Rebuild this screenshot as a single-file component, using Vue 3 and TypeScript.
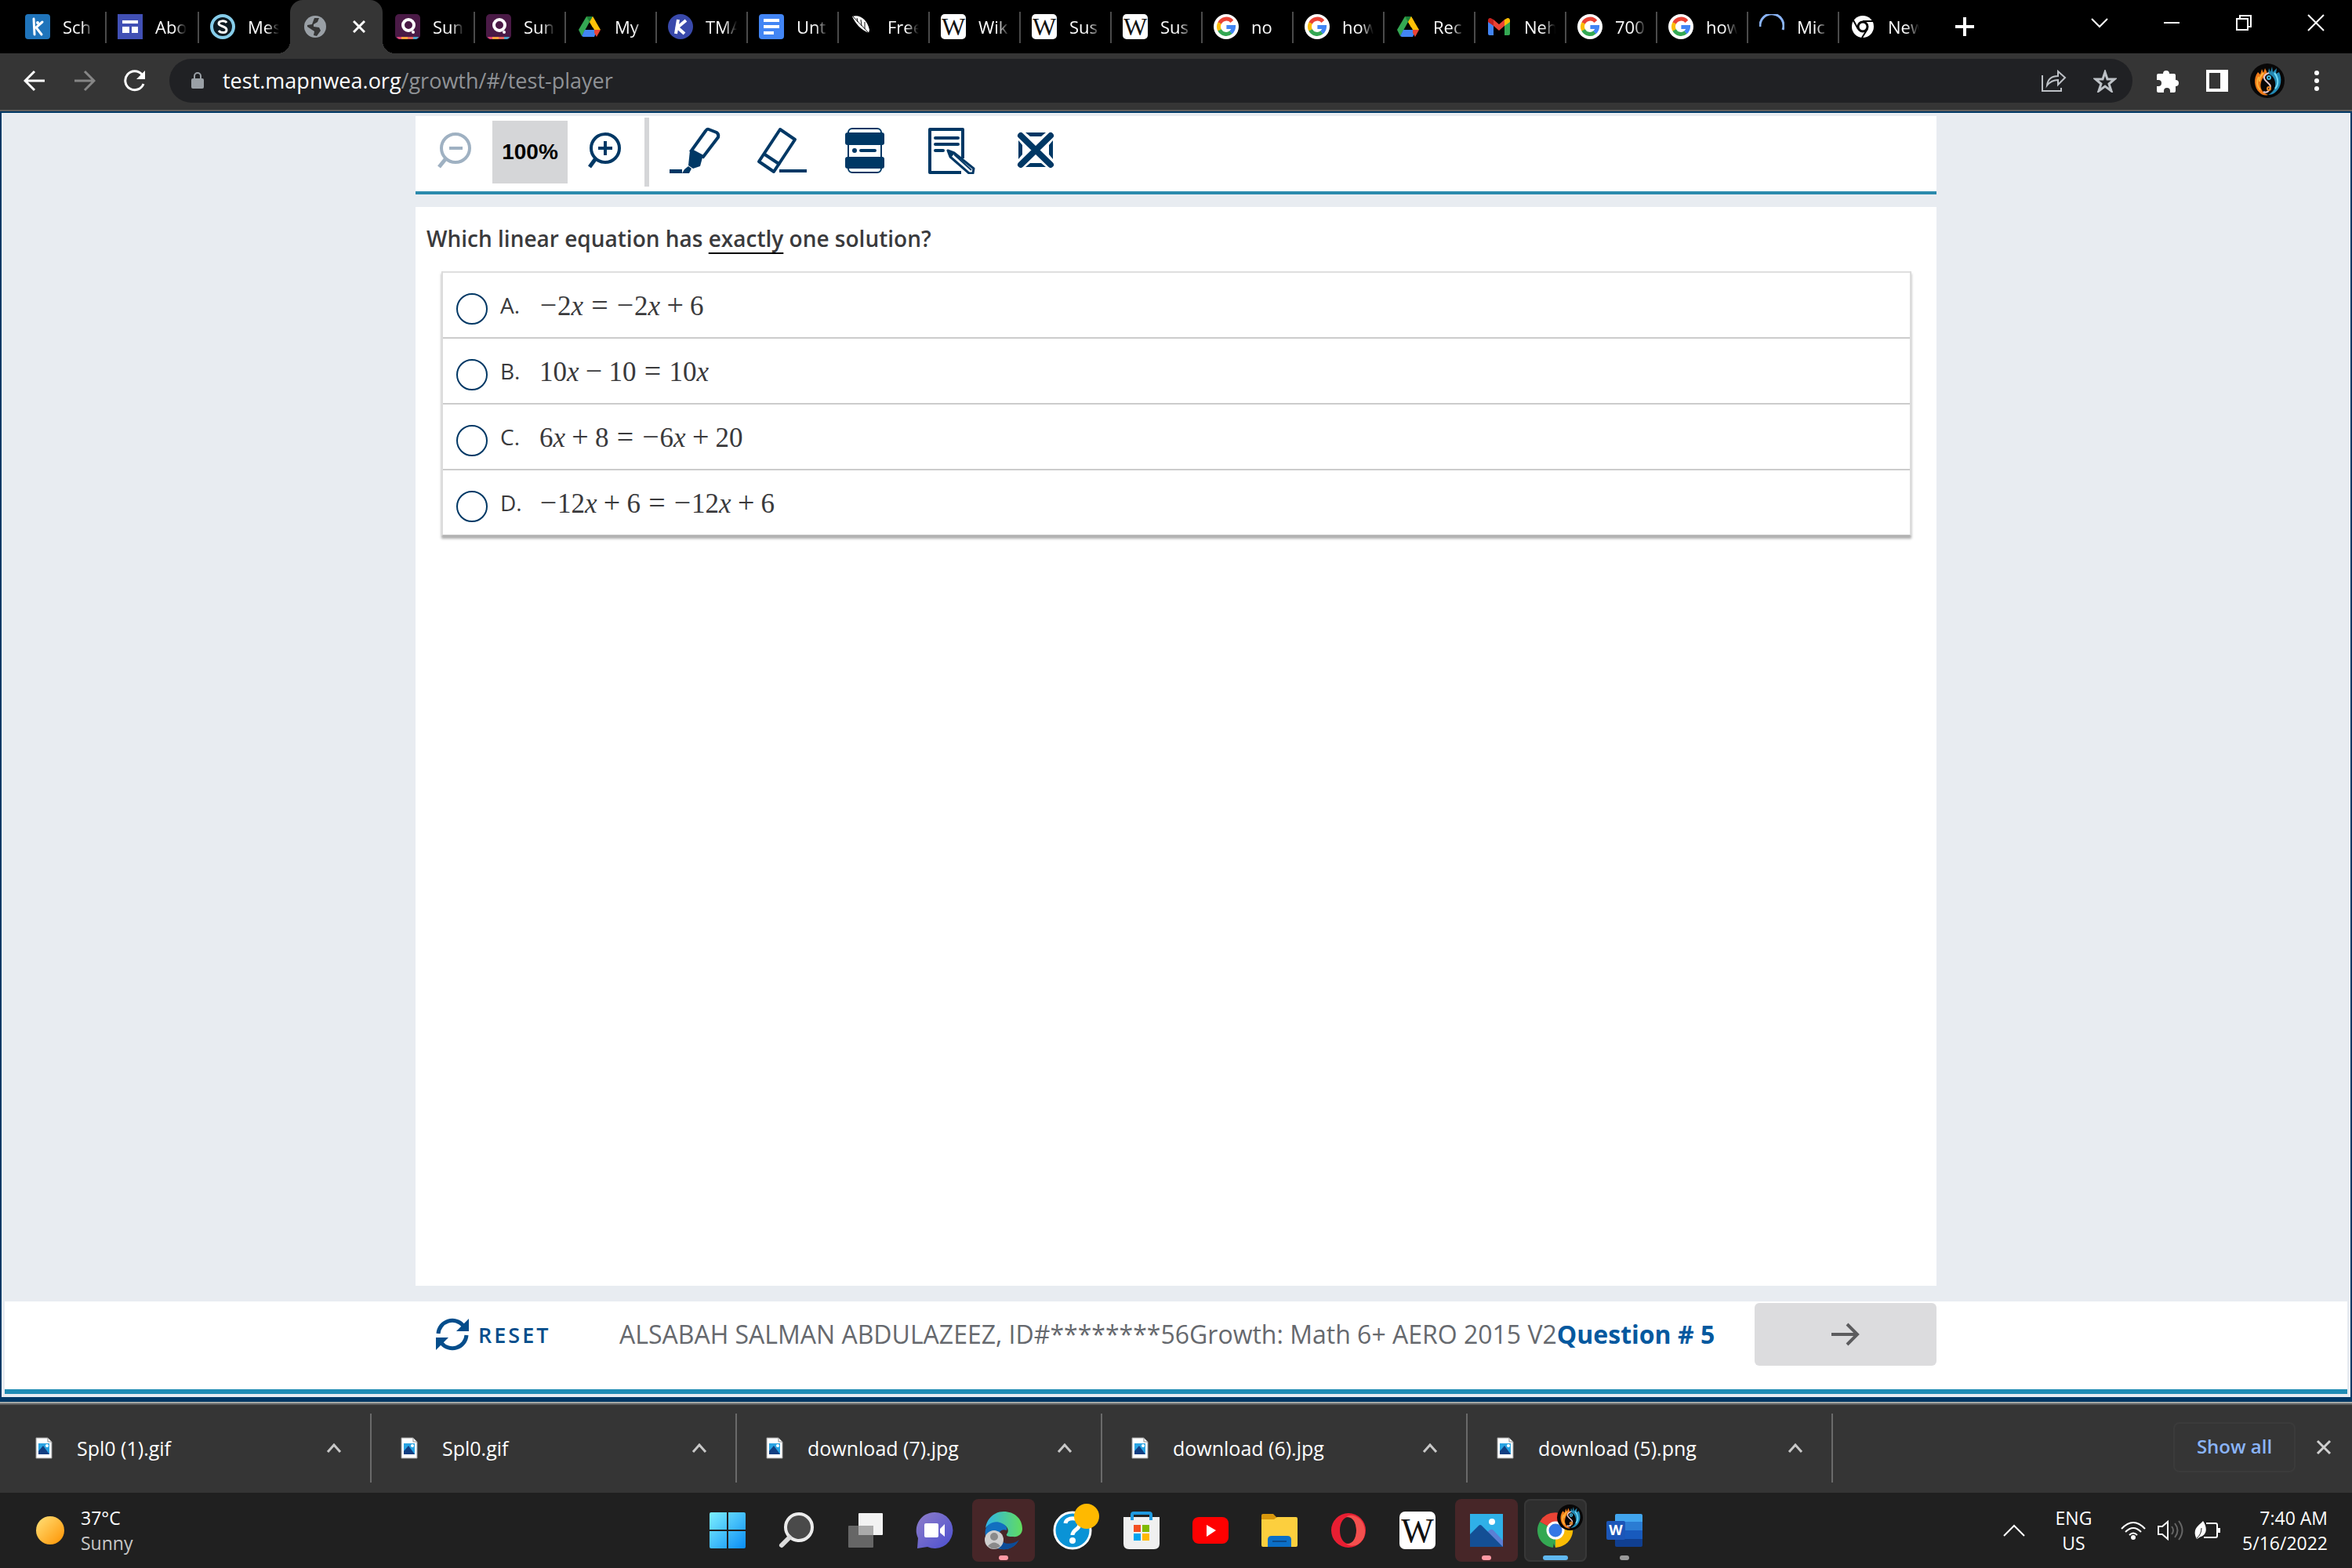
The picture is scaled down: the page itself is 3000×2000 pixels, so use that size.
<script setup lang="ts">
import { ref } from 'vue'

interface Tab { icon: string; title: string; wide?: boolean; active?: boolean }
interface Term { kind: 'num' | 'var' | 'neg' | 'bin' | 'rel'; text: string }
interface Choice { letter: string; terms: Term[] }
interface TaskItem { name: string; icon: string; tone?: 'alert' | 'current'; mark?: 'pink' | 'blue' | 'grey' }

const svg = (w: number, h: number, body: string): string =>
  `<svg width="${w}" height="${h}" viewBox="0 0 ${w} ${h}" fill="none" aria-hidden="true">${body}</svg>`

const serifW = (size: number, x: number, y: number): string =>
  `<text x="${x}" y="${y}" font-family="Liberation Serif, serif" font-size="${size}" text-anchor="middle" fill="#111">W</text>`

const google = svg(32, 32, `<circle cx="16" cy="16" r="16" fill="#fff"/>
  <g stroke-width="5"><path d="M23.4 9.4A9.5 9.5 0 0 0 7.6 11.6" stroke="#ea4335"/><path d="M7.7 11.4a9.5 9.5 0 0 0 0 9.2" stroke="#fbbc05"/>
  <path d="M7.6 20.4a9.5 9.5 0 0 0 14.6 2.8" stroke="#34a853"/><path d="M16.4 16.4H25.5A9.5 9.5 0 0 1 21.9 23.4" stroke="#4285f4"/></g>`)

const drive = svg(32, 32, `<path d="M12 3h8l4 7-4 7z" fill="#fbbc04"/><path d="M20 3l10 17h-8L12 3z" fill="#ffc107"/>
  <path d="M12 3l4 7L6 28 2 20z" fill="#34a853"/><path d="M12 3h8l-4 7z" fill="#188038"/><path d="M10 20h16l-4 9H8l-2-1z" fill="#4285f4"/><path d="M22 20h8l-5 9-3-5z" fill="#ea4335"/>`)

const quill = svg(32, 32, `<rect width="32" height="32" rx="5" fill="#4a1a46"/><circle cx="17" cy="14" r="7" stroke="#fff" stroke-width="4"/>
  <circle cx="23" cy="23" r="2" fill="#fff"/><path d="M2 29h7v3H5a5 5 0 0 1-3-3" fill="#e0457b"/><path d="M8 29h8v3H8z" fill="#f9a13a"/><path d="M16 29h7v3h-7z" fill="#e8655a"/><path d="M23 29h7a5 5 0 0 1-3 3h-4z" fill="#4aa3c7"/>`)

const wiki = svg(32, 32, `<rect width="32" height="32" rx="5" fill="#fff"/>${serifW(32, 16, 27)}`)

const favicons: Record<string, string> = {
  google, drive, quill, wiki,
  kid: svg(32, 32, `<rect width="32" height="32" rx="4" fill="#1f74bb"/><circle cx="16" cy="11" r="2" fill="#fff"/><path d="M11 6l1 20M22 10l-8 7 7 9" stroke="#fff" stroke-width="3" stroke-linecap="round"/>`),
  sites: svg(32, 32, `<rect width="32" height="32" fill="#4150b5"/><path d="M6 8h20v4H6zM6 16h9v8H6zM18 16h8v8h-8z" fill="#fff"/>`),
  skool: svg(32, 32, `<circle cx="16" cy="16" r="14" fill="#0d1a22" stroke="#86cdea" stroke-width="4"/><path d="M21 11c-2-3-10-3-10 1s10 3 10 8-8 4-10 1" stroke="#fff" stroke-width="3"/>`),
  kay: svg(32, 32, `<circle cx="16" cy="16" r="16" fill="#3949ab"/><path d="M13 7l-3 18M23 8l-11 9 9 8" stroke="#fff" stroke-width="4"/>`),
  docs: svg(32, 32, `<rect width="32" height="32" rx="4" fill="#4285f4"/><path d="M6 8h20M6 16h20M6 24h13" stroke="#fff" stroke-width="4"/>`),
  feather: svg(32, 32, `<path d="M3 3c10-3 19 4 22 17l-1 4C14 20 7 12 3 3z" fill="#fff"/><path d="M4 3c6 7 13 13 20 21M10 10l-1-5M15 15l-1-8M19 19V10" stroke="#111" stroke-width="1"/>`),
  gmail: svg(32, 32, `<path d="M2 9l7 5v13H4a2 2 0 0 1-2-2z" fill="#4285f4"/><path d="M23 14l7-5v16a2 2 0 0 1-2 2h-5z" fill="#34a853"/><path d="M9 7l7 6 7-6v8l-7 6-7-6z" fill="#ea4335"/><path d="M2 8c0-3 3-4 5-2l2 1v8l-7-5z" fill="#c5221f"/><path d="M30 8c0-3-3-4-5-2l-2 1v8l7-5z" fill="#fbbc04"/>`),
  spin: svg(32, 32, `<path d="M1 16A15 15 0 1 1 30 20" stroke="#8ab4f8" stroke-width="3"/>`),
  chrome: svg(32, 32, `<circle cx="16" cy="16" r="14" fill="#fff"/><circle cx="16" cy="16" r="6" fill="#fff" stroke="#000" stroke-width="3"/><path d="M16 9h14M10 19L4 8M22 19l-7 11" stroke="#000" stroke-width="2"/>`),
  globe: svg(28, 28, `<circle cx="14" cy="14" r="14" fill="#9aa0a6"/><path d="M13 3l6 0-2 5-5 3 0 3 7 1 2 4-5 7-4-1 1-5-9-6 0-2 6-1z" fill="#353535"/><path d="M3 9l5-5 4-1" stroke="#9aa0a6" stroke-width="2"/>`),
}

const tabs: Tab[] = [
  { icon: 'kid', title: 'Sch', wide: true },
  { icon: 'sites', title: 'Abo', wide: true },
  { icon: 'skool', title: 'Mes', wide: true },
  { icon: 'globe', title: '', wide: true, active: true },
  { icon: 'quill', title: 'Sun' },
  { icon: 'quill', title: 'Sun' },
  { icon: 'drive', title: 'My' },
  { icon: 'kay', title: 'TMA' },
  { icon: 'docs', title: 'Unt' },
  { icon: 'feather', title: 'Free' },
  { icon: 'wiki', title: 'Wik' },
  { icon: 'wiki', title: 'Sus' },
  { icon: 'wiki', title: 'Sus' },
  { icon: 'google', title: 'no' },
  { icon: 'google', title: 'how' },
  { icon: 'drive', title: 'Rec' },
  { icon: 'gmail', title: 'Neh' },
  { icon: 'google', title: '700' },
  { icon: 'google', title: 'how' },
  { icon: 'spin', title: 'Mic' },
  { icon: 'chrome', title: 'New' },
]

const flame = `<circle cx="22" cy="22" r="22" fill="#080707"/>
  <path d="M19 6l-2 6-2-5-2 7-3-3C4 18 5 31 12 37c4 4 8 4 11 3-8-3-11-9-9-16 1-5 5-9 8-10l-1-4z" fill="#ef7a18"/>
  <path d="M11 17c-3 6-2 12 2 17M17 12c-3 3-5 6-5 11" stroke="#ffb63c" stroke-width="2"/>
  <path d="M24 6l2 5 2-7 1 7 5-5-1 7 4-2c4 8 3 19-4 25-3 3-7 4-10 4 7-4 10-9 9-16-1-6-4-9-9-11z" fill="#2389b4"/>
  <path d="M31 12c5 6 6 14 1 20" stroke="#6fd8f5" stroke-width="2"/>
  <path d="M24 12c-6 2-8 6-4 10s8 6 5 11-6 4-8 3" stroke="#e0c6cf" stroke-width="2"/><circle cx="24" cy="18" r="2" stroke="#45b9e0" stroke-width="2"/><circle cx="24" cy="32" r="2" stroke="#ef8b2a" stroke-width="2"/>`

const n = (text: string): Term => ({ kind: 'num', text })
const x: Term = { kind: 'var', text: 'x' }
const neg: Term = { kind: 'neg', text: '−' }
const plus: Term = { kind: 'bin', text: '+' }
const minus: Term = { kind: 'bin', text: '−' }
const eq: Term = { kind: 'rel', text: '=' }

const choices: Choice[] = [
  { letter: 'A.', terms: [neg, n('2'), x, eq, neg, n('2'), x, plus, n('6')] },
  { letter: 'B.', terms: [n('10'), x, minus, n('10'), eq, n('10'), x] },
  { letter: 'C.', terms: [n('6'), x, plus, n('8'), eq, neg, n('6'), x, plus, n('20')] },
  { letter: 'D.', terms: [neg, n('12'), x, plus, n('6'), eq, neg, n('12'), x, plus, n('6')] },
]
const picked = ref<string>('')

const tools: { name: string; icon: string }[] = [
  { name: 'Highlighter', icon: svg(68, 60, `<path d="M52 3l10 4q3 2 2 6L45 38 30 30 48 5q2-3 4-2z" stroke="#003865" stroke-width="4"/><path d="M28 30l16 9-3 11-9 3-6-4z" fill="#003865"/><path d="M2 54h16v5H2zM21 54l5-4 4 3-3 6h-9z" fill="#003865"/>`) },
  { name: 'Eraser', icon: svg(68, 60, `<path d="M34 3l19 13-27 41L7 44z" stroke="#003865" stroke-width="4" stroke-linejoin="round"/><path d="M13 34l21 14" stroke="#003865" stroke-width="4"/><path d="M33 56h35" stroke="#003865" stroke-width="4"/>`) },
  { name: 'Line reader', icon: svg(68, 60, `<rect x="12" y="2" width="42" height="56" rx="5" stroke="#003865" stroke-width="2"/><rect x="8" y="7" width="50" height="16" rx="3" fill="#003865"/><rect x="8" y="38" width="50" height="15" rx="3" fill="#003865"/><path d="M28 30h18" stroke="#003865" stroke-width="4" stroke-linecap="round"/><circle cx="20" cy="30" r="3" fill="#003865"/>`) },
  { name: 'Notepad', icon: svg(68, 60, `<path d="M49 40V3H7v55h40" stroke="#003865" stroke-width="4" stroke-linejoin="round"/><path d="M14 14h29M14 22h29M14 30h10" stroke="#003865" stroke-width="4" stroke-linecap="round"/><path d="M30 30l8 3 25 20-1 6h-5L33 38z" fill="#fff" stroke="#003865" stroke-width="3" stroke-linejoin="round"/><path d="M38 35l22 20" stroke="#003865" stroke-width="2"/><path d="M30 30l9 3-5 6z" fill="#003865"/>`) },
  { name: 'Answer eliminator', icon: svg(68, 60, `<path d="M20 7h26l-6 5H26zM20 51h26l-6-5H26zM11 17l5 6v12l-5 6zM55 17l-5 6v12l5 6z" fill="#003865"/><path d="M14 11l38 37M52 11L14 48" stroke="#003865" stroke-width="8" stroke-linecap="round"/>`) },
]

const downloads: string[] = ['Spl0 (1).gif', 'Spl0.gif', 'download (7).jpg', 'download (6).jpg', 'download (5).png']

const fileIcon = svg(22, 28, `<path d="M1 1h15l5 5v21H1z" fill="#fff" stroke="#9a9a9a"/><path d="M16 1v5h5" stroke="#8a8a8a"/><path d="M4 8h14v14H4z" fill="#29a3e2"/><path d="M4 22v-4l6-7 8 11z" fill="#123f82"/><circle cx="15" cy="11" r="2" fill="#fff"/>`)
const up = svg(20, 12, `<path d="M2 11l8-9 8 9" stroke="#c8c8c8" stroke-width="3"/>`)

const taskItems: TaskItem[] = [
  { name: 'Start', icon: svg(46, 46, `<defs><linearGradient id="win" gradientUnits="userSpaceOnUse" x1="0" y1="0" x2="46" y2="46"><stop stop-color="#7df0ff"/><stop offset="1" stop-color="#0a8df5"/></linearGradient></defs><path d="M2 0h20v22H0V2q0-2 2-2zM24 0h20q2 0 2 2v20H24zM0 24h22v22H2q-2 0-2-2zM24 24h22v20q0 2-2 2H24z" fill="url(#win)"/>`) },
  { name: 'Search', icon: svg(46, 46, `<circle cx="26" cy="19" r="17" fill="#4a4a4a" stroke="#ececec" stroke-width="4"/><path d="M14 32L4 42" stroke="#dcdcdc" stroke-width="6" stroke-linecap="round"/>`) },
  { name: 'Task view', icon: svg(46, 46, `<rect x="14" y="1" width="31" height="28" rx="1" fill="#f2f2f2"/><rect x="1" y="17" width="32" height="28" rx="1" fill="#666"/><path d="M14 17h19v12H14z" fill="#aaa"/>`) },
  { name: 'Chat', icon: svg(46, 46, `<defs><linearGradient id="cht" x1="0" y1="0" x2="1" y2="1"><stop stop-color="#8f7ec9"/><stop offset="1" stop-color="#4b4fd0"/></linearGradient></defs><path d="M23 0a23 23 0 1 1-9 44L1 46l1-13A23 23 0 0 1 23 0z" fill="url(#cht)"/><rect x="10" y="14" width="18" height="18" rx="2" fill="#fff"/><path d="M30 21l6-6v16l-6-5z" fill="#fff"/>`) },
  { name: 'Edge', tone: 'alert', mark: 'pink', icon: svg(50, 50, `<defs><linearGradient id="edg"><stop stop-color="#2fb3e8"/><stop offset="1" stop-color="#62dd5e"/></linearGradient></defs><path d="M2 22C4 8 15 1 25 1c14 0 24 9 24 22 0 7-6 11-12 10-6 0-9-1-8-3 4-5 1-11-6-13-9-3-17 0-21 5z" fill="url(#edg)"/><path d="M2 24c3-9 13-12 21-8 5 2 7 5 6 9-6-3-12 2-10 11s12 12 24 4C36 50 24 51 15 47 5 43 0 34 2 24z" fill="#126fc0"/><path d="M21 29c-3 13 12 17 24 8-5 9-13 13-22 12-8-4-8-13-2-20z" fill="#0c4c98"/><circle cx="13" cy="37" r="12" fill="#cfcfcf"/><circle cx="13" cy="33" r="5" fill="#8a8a8a"/><path d="M5 45q8-9 16 0-8 7-16 0z" fill="#8a8a8a"/>`) },
  { name: 'Get help', icon: svg(58, 58, `<circle cx="29" cy="29" r="23" fill="#0a93d6" stroke="#fff" stroke-width="3"/><path d="M20 20c1-8 17-9 18 1 0 7-9 7-9 14" stroke="#fff" stroke-width="5"/><circle cx="29" cy="42" r="4" fill="#fff"/><circle cx="47" cy="11" r="16" fill="#ffb900"/>`) },
  { name: 'Store', icon: svg(46, 48, `<path d="M0 7h46v34q0 7-7 7H7q-7 0-7-7z" fill="#f0f0f0"/><path d="M11 11V4q0-2 2-2h20q2 0 2 2v7" stroke="#1f9ae0" stroke-width="4"/><path d="M13 17h9v9h-9z" fill="#f25022"/><path d="M24 17h9v9h-9z" fill="#7fba00"/><path d="M13 28h9v9h-9z" fill="#00a4ef"/><path d="M24 28h9v9h-9z" fill="#ffb900"/>`) },
  { name: 'YouTube', icon: svg(48, 36, `<rect x="1" y="1" width="46" height="34" rx="8" fill="#f00"/><path d="M19 11l12 7-12 8z" fill="#fff"/>`) },
  { name: 'Files', icon: svg(46, 42, `<path d="M0 2q0-2 2-2h13l5 5h8v4H0z" fill="#d8970c"/><path d="M0 7h16l4-3h24q2 0 2 2v34q0 2-2 2H2q-2 0-2-2z" fill="#fccf3e"/><path d="M8 42V33q0-5 5-5h20q5 0 5 5v9z" fill="#0b6fc7"/><path d="M14 35h18" stroke="#0a4a8a" stroke-width="2"/>`) },
  { name: 'Opera', icon: svg(44, 44, `<path fill-rule="evenodd" d="M22 0a22 22 0 1 1 0 44 22 22 0 1 1 0-44zM22 5c-6 0-11 7-11 17s5 17 11 17 10-7 10-17S28 5 22 5z" fill="#e81e32"/><path d="M19 5C25-1 42 5 43 22S27 46 19 39c9 1 13-8 13-17S28 4 19 5z" fill="#f4504e"/>`) },
  { name: 'Wikipedia', icon: svg(46, 48, `<rect width="46" height="48" rx="7" fill="#fff"/>${serifW(44, 23, 39)}`) },
  { name: 'Photos', tone: 'alert', mark: 'pink', icon: svg(42, 42, `<path d="M0 0h42v42H0z" fill="#2fb0e8"/><circle cx="28" cy="10" r="4" fill="#fff"/><path d="M18 26l8-6q2-1 4 1l12 13v8H20z" fill="#5b7fd4"/><path d="M0 26l11-11q2-2 4 0l27 27H0z" fill="#144f95"/>`) },
  { name: 'Chrome', tone: 'current', mark: 'blue', icon: svg(58, 58, `<path d="M29 29L9 18a23 23 0 0 1 40 0z" fill="#ea4335"/><path d="M29 29l20-11a23 23 0 0 1-20 33z" fill="#fbbc04"/><path d="M29 29v0L26 51A22 22 0 0 1 9 18z" fill="#34a853"/><path d="M29 29H19l10 22z" fill="#34a853"/><circle cx="29" cy="29" r="10" fill="#3578e5" stroke="#fff" stroke-width="3"/><g transform="translate(31 -4) scale(.75)">${flame}</g>`) },
  { name: 'Word', mark: 'grey', icon: svg(46, 42, `<path d="M11 2q0-2 2-2h31q2 0 2 2v8H11z" fill="#41a5ee"/><path d="M11 10h35v11H11z" fill="#2b7cd3"/><path d="M11 21h35v11H11z" fill="#185abd"/><path d="M11 32h35v8q0 2-2 2H13q-2 0-2-2z" fill="#103f91"/><rect y="9" width="24" height="24" rx="2" fill="#1b56b8"/><text x="12" y="27" font-family="Open Sans, sans-serif" font-size="18" font-weight="700" text-anchor="middle" fill="#fff">W</text>`) },
]
</script>

<template>
  <div class="screen">
    <header class="tabstrip">
      <nav class="tabs" aria-label="Tabs">
        <div v-for="(tab, i) in tabs" :key="i" class="tab" :class="{ wide: tab.wide, active: tab.active, plain: i === 0 || i === 4 }">
          <span class="favicon" v-html="favicons[tab.icon]"></span>
          <span v-if="!tab.active" class="title">{{ tab.title }}</span>
          <button v-else class="bare" aria-label="Close tab">
            <svg width="16" height="16" viewBox="0 0 16 16"><path d="M1 1l14 14M15 1L1 15" stroke="#fff" stroke-width="3" /></svg>
          </button>
        </div>
        <button class="bare newtab" aria-label="New tab">
          <svg width="24" height="24" viewBox="0 0 24 24"><path d="M12 0v24M0 12h24" stroke="#fff" stroke-width="4" /></svg>
        </button>
      </nav>
      <div class="window">
        <button class="bare" aria-label="Search tabs"><svg width="22" height="22" viewBox="0 0 22 22" fill="none"><path d="M1 6l10 10L21 6" stroke="#fff" stroke-width="2" /></svg></button>
        <button class="bare" aria-label="Minimise"><svg width="22" height="22" viewBox="0 0 22 22"><path d="M1 11h20" stroke="#fff" stroke-width="2" /></svg></button>
        <button class="bare" aria-label="Restore"><svg width="22" height="22" viewBox="0 0 22 22" fill="none" stroke="#fff" stroke-width="2"><path d="M2 6h14v14H2zM6 6V2h14v14h-4" /></svg></button>
        <button class="bare" aria-label="Close"><svg width="22" height="22" viewBox="0 0 22 22"><path d="M1 1l20 20M21 1L1 21" stroke="#fff" stroke-width="2" /></svg></button>
      </div>
    </header>

    <div class="navbar">
      <div class="navbuttons">
        <button class="bare" aria-label="Back"><svg width="28" height="28" viewBox="0 0 28 28" fill="none" stroke="#fff" stroke-width="3"><path d="M27 14H3M14 2L2 14l12 12" /></svg></button>
        <button class="bare" aria-label="Forward"><svg width="28" height="28" viewBox="0 0 28 28" fill="none" stroke="#868686" stroke-width="3"><path d="M1 14h24M14 2l12 12-12 12" /></svg></button>
        <button class="bare" aria-label="Reload"><svg width="28" height="28" viewBox="0 0 28 28" fill="none"><path d="M23 6a12 12 0 1 0 2 12" stroke="#fff" stroke-width="3" /><path d="M27 1v11H16z" fill="#fff" /></svg></button>
      </div>
      <div class="omnibox">
        <svg width="18" height="24" viewBox="0 0 18 24" fill="none"><rect x="1" y="9" width="16" height="13" rx="2" fill="#9aa0a6" /><path d="M5 9V6a4 4 0 0 1 8 0v3" stroke="#9aa0a6" stroke-width="2" /></svg>
        <p class="url">test.mapnwea.org<span>/growth/#/test-player</span></p>
        <button class="bare share" aria-label="Share"><svg width="32" height="28" viewBox="0 0 32 28" fill="none" stroke="#bdc1c6" stroke-width="2"><path d="M1 7v20h24v-4" /><path d="M7 20C8 12 13 8 21 8V2l9 8-9 9v-6c-6 0-10 2-14 7z" /></svg></button>
        <button class="bare" aria-label="Bookmark"><svg width="30" height="29" viewBox="0 0 30 29" fill="none"><path d="M15 3l3 9h9l-7 6 3 9-8-6-8 6 3-9-7-6h9z" stroke="#bdc1c6" stroke-width="3" /></svg></button>
      </div>
      <div class="extras">
        <button class="bare" aria-label="Extensions"><svg width="30" height="30" viewBox="0 0 30 30"><path d="M9 6a4 4 0 0 1 8 0h6q2 0 2 2v6a4 4 0 0 1 0 8v6q0 2-2 2h-5v-2a4 4 0 0 0-8 0v2H3q-2 0-2-2v-6h2a4 4 0 0 0 0-8H1V8q0-2 2-2z" fill="#fff" /></svg></button>
        <button class="bare" aria-label="Side panel"><svg width="28" height="28" viewBox="0 0 28 28"><path fill-rule="evenodd" d="M0 0h28v28H0zM4 4v20h14V4z" fill="#fff" /></svg></button>
        <button class="bare profile" aria-label="Profile"><svg width="44" height="44" viewBox="0 0 44 44" fill="none" v-html="flame"></svg></button>
        <button class="bare" aria-label="Menu"><svg width="6" height="28" viewBox="0 0 6 28" fill="#fff"><circle cx="3" cy="4" r="3" /><circle cx="3" cy="14" r="3" /><circle cx="3" cy="24" r="3" /></svg></button>
      </div>
    </div>

    <main class="page">
      <div class="column">
        <div class="toolbar">
          <button class="bare" aria-label="Zoom out" disabled><svg width="44" height="46" viewBox="0 0 44 46" fill="none" stroke="#9fb1c2" stroke-width="4"><circle cx="23" cy="20" r="18" /><path d="M15 20h17" /><path d="M11 33L2 44" stroke-width="5" /></svg></button>
          <output class="level">100%</output>
          <button class="bare" aria-label="Zoom in"><svg width="44" height="46" viewBox="0 0 44 46" fill="none" stroke="#003865" stroke-width="4"><circle cx="22" cy="20" r="18" /><path d="M13 20h18M22 11v18" /><path d="M10 33L2 44" stroke-width="5" /></svg></button>
          <div class="rule"></div>
          <div class="tools">
            <button v-for="tool in tools" :key="tool.name" class="bare" :aria-label="tool.name" v-html="tool.icon"></button>
          </div>
        </div>
        <form class="question" @submit.prevent>
          <h1>Which linear equation has <u>exactly</u> one solution?</h1>
          <div class="choices">
            <label v-for="choice in choices" :key="choice.letter" class="choice">
              <input v-model="picked" type="radio" name="answer" :value="choice.letter" />
              <span class="letter">{{ choice.letter }}</span>
              <span class="math"><span v-for="(term, i) in choice.terms" :key="i" :class="term.kind">{{ term.text }}</span></span>
            </label>
          </div>
        </form>
      </div>
      <footer class="footer">
        <div class="footrow">
          <button class="bare reset">
            <svg width="42" height="42" viewBox="0 0 42 42" fill="none" stroke="#044d8b" stroke-width="5"><path d="M3 20A18 18 0 0 1 35 10M39 22A18 18 0 0 1 7 32" /><path d="M42 1v16H26zM0 41V25h16z" fill="#044d8b" stroke="none" /></svg>
            RESET
          </button>
          <p class="student">ALSABAH SALMAN ABDULAZEEZ, ID#********56Growth: Math 6+ AERO 2015 V2<strong>Question # 5</strong></p>
          <button class="next" aria-label="Next question"><svg width="36" height="30" viewBox="0 0 36 30" fill="none" stroke="#5c5c5e" stroke-width="4"><path d="M0 15h33M20 2l13 13-13 13" /></svg></button>
        </div>
      </footer>
    </main>

    <section class="downloads" aria-label="Downloads">
      <div v-for="file in downloads" :key="file" class="file">
        <span class="glyph" v-html="fileIcon"></span>
        <span class="filename">{{ file }}</span>
        <button class="bare" aria-label="File options" v-html="up"></button>
      </div>
      <button class="showall">Show all</button>
      <button class="bare dismiss" aria-label="Close downloads"><svg width="20" height="20" viewBox="0 0 20 20"><path d="M2 2l16 16M18 2L2 18" stroke="#d0d0d0" stroke-width="3" /></svg></button>
    </section>

    <footer class="taskbar">
      <div class="weather">
        <svg width="38" height="38" viewBox="0 0 38 38"><defs><linearGradient id="sun" x1="0" y1="0" x2="1" y2="1"><stop stop-color="#ffe27a" /><stop offset="1" stop-color="#ff9200" /></linearGradient></defs><circle cx="19" cy="19" r="18" fill="url(#sun)" /></svg>
        <p>37°C<br /><span>Sunny</span></p>
      </div>
      <div class="apps">
        <button v-for="item in taskItems" :key="item.name" class="app" :class="item.tone" :aria-label="item.name">
          <span class="glyph" v-html="item.icon"></span>
          <i v-if="item.mark" class="mark" :class="item.mark"></i>
        </button>
      </div>
      <div class="tray">
        <svg width="28" height="16" viewBox="0 0 28 16" fill="none"><path d="M1 15L14 2l13 13" stroke="#fff" stroke-width="2" /></svg>
        <p class="lang">ENG<br />US</p>
        <div class="status">
          <svg width="32" height="24" viewBox="0 0 32 24" fill="none" stroke="#fff" stroke-width="2"><path d="M1 10Q16-6 31 10M6 14q10-10 20 0M11 18q5-5 10 0" /><circle cx="16" cy="21" r="2" fill="#fff" /></svg>
          <svg width="34" height="28" viewBox="0 0 34 28" fill="none" stroke-width="2"><path d="M2 9h5l7-6v22l-7-6H2z" stroke="#fff" /><path d="M19 9q4 5 0 10M23 5q7 9 0 18M28 2q9 12 0 24" stroke="#666" /></svg>
          <svg width="34" height="24" viewBox="0 0 34 24" fill="none"><path d="M15 3h12q2 0 2 2v14q0 2-2 2H12" stroke="#fff" stroke-width="2" /><path d="M30 9h3v6h-3z" fill="#fff" /><path d="M11 0c5 7 6 17-3 20l-5 3-1-2C-3 9 7 5 11 0z" fill="#fff" /><path d="M3 22Q9 17 9 9" stroke="#202020" /></svg>
        </div>
        <p class="clock">7:40 AM<br />5/16/2022</p>
      </div>
    </footer>
  </div>
</template>

<style>
body { margin: 0; background: #202020; }
</style>

<style scoped>
.screen { display: flex; flex-direction: column; min-height: 100vh; font-family: "Open Sans", "Noto Sans", sans-serif; font-size: 24px; color: #fff; }
.screen * { box-sizing: border-box; }
p, h1 { margin: 0; font-weight: 400; }
button { font: inherit; cursor: pointer; }
.bare { display: flex; align-items: center; padding: 0; border: 0; background: none; color: inherit; flex: none; }
svg { display: block; flex: none; }
:deep(svg) { display: block; flex: none; }

.tabstrip { display: flex; justify-content: space-between; height: 68px; background: #000; }
.tabs { display: flex; align-items: center; padding-left: 16px; }
.tab { position: relative; display: flex; align-items: center; gap: 16px; flex: none; width: 116px; height: 68px; padding-left: 16px; }
.tab.wide { width: 118px; }
.tab::before { content: ""; position: absolute; left: 0; top: 15px; width: 2px; height: 40px; background: #4a4a4a; }
.tab.plain::before { display: none; }
.title { width: 40px; white-space: nowrap; font-size: 22px; line-height: 40px; mask-image: linear-gradient(90deg, #000 60%, transparent); }
.tab.active { gap: 34px; padding-left: 18px; background: #353535; border-radius: 16px 16px 0 0; }
.tab.active::before { left: -16px; top: auto; bottom: 0; width: 16px; height: 16px; background: radial-gradient(circle at 0 0, transparent 16px, #353535 16px); }
.tab.active::after { content: ""; position: absolute; right: -16px; bottom: 0; width: 16px; height: 16px; background: radial-gradient(circle at 100% 0, transparent 16px, #353535 16px); }
.newtab { margin-left: 34px; }
.window { display: flex; align-items: flex-start; gap: 70px; padding: 18px 35px 0 0; }

.navbar { display: flex; align-items: center; height: 74px; padding: 0 42px 2px 30px; background: #353535; border-bottom: 2px solid #635f5d; }
.navbuttons { display: flex; gap: 36px; width: 186px; flex: none; }
.omnibox { display: flex; align-items: center; flex: 1; height: 56px; padding: 0 20px 0 27px; border-radius: 28px; background: #202124; }
.url { margin-left: 23px; font-size: 27px; line-height: 40px; }
.url span { color: #8f9296; }
.share { margin: 0 34px 0 auto; }
.extras { display: flex; align-items: center; gap: 34px; padding-left: 30px; }
.profile { margin: 0 4px 0 -6px; }

.page { display: flex; flex-direction: column; flex: 1; border: 2px solid #003865; border-bottom-width: 6px; background: #e8ecf1; }
.column { display: flex; flex-direction: column; flex: 1; width: 100%; max-width: 1940px; margin: 0 auto; padding: 4px 0 20px; }
.toolbar { display: flex; align-items: center; height: 100px; padding: 0 0 4px 28px; background: #fff; border-bottom: 4px solid #2b8aad; }
.toolbar .bare { padding-bottom: 4px; }
.level { width: 96px; margin: 0 26px; background: #d5d6d8; color: #000; font: 700 28px/80px "Liberation Sans", Arial, sans-serif; text-align: center; }
.rule { width: 6px; height: 88px; margin: 0 24px 0 28px; background: #d5d6d8; }
.tools { display: flex; gap: 41px; }
.question { flex: 1; margin-top: 16px; padding: 20px 32px 0 14px; background: #fff; color: #3a3a3c; }
h1 { font-size: 28px; font-weight: 600; line-height: 40px; }
u { text-decoration: underline 2px #000; text-underline-offset: 7px; text-decoration-skip-ink: none; }
.choices { margin: 22px 0 0 19px; border: 2px solid #dcdcdc; border-top: 0; border-bottom-color: #b8b8b8; box-shadow: 0 3px 3px #aaa; }
.choice { display: flex; height: 84px; padding-left: 17px; border-top: 2px solid #ccc; font-size: 28px; line-height: 82px; }
.choice:first-child { border-top-color: #dfdfdf; }
.choice input { appearance: none; width: 40px; height: 40px; margin: 26px 16px 0 0; border: 2px solid #003865; border-radius: 50%; background: #fff; }
.choice input:checked { background: #003865; box-shadow: inset 0 0 0 6px #fff; }
.letter { width: 50px; }
.math { display: flex; align-items: baseline; font-family: "Liberation Serif", "Times New Roman", serif; font-size: 35px; }
.var { font-style: italic; }
.neg, .bin, .rel { font-size: 38px; text-align: center; }
.neg { width: 23px; }
.bin { width: 38px; }
.rel { width: 42px; }

.footer { height: 122px; margin: 0 4px; padding-top: 2px; background: linear-gradient(#fff, #fff) 0 0 / 100% 112px no-repeat, linear-gradient(#208cb4, #208cb4) 0 112px / 100% 6px no-repeat; }
.footrow { display: flex; align-items: center; width: 100%; max-width: 1940px; height: 80px; margin: 0 auto; }
.reset { gap: 12px; width: 260px; padding-left: 26px; color: #044d8b; font-size: 27px; font-weight: 600; letter-spacing: 3px; }
.student { color: #66696e; font-size: 32px; line-height: 40px; white-space: nowrap; }
.student strong { color: #05599f; font-weight: 700; }
.next { display: flex; align-items: center; justify-content: center; width: 232px; height: 80px; margin-left: auto; border: 0; border-radius: 6px; background: #dcdcde; }

.downloads { display: flex; align-items: center; height: 116px; padding: 0 26px 0 8px; border-top: 2px solid #a3a8a6; background: #353535; box-shadow: inset 0 2px #5f6061; }
.file { display: flex; align-items: center; width: 466px; height: 88px; padding: 0 36px 0 37px; border-right: 2px solid #6a6a6a; }
.filename { flex: 1; margin-left: 31px; font-size: 25px; line-height: 40px; }
.showall { width: 156px; height: 64px; margin: 0 26px 2px auto; padding: 0 0 4px; border: 2px solid #3b3b3b; border-radius: 8px; background: none; color: #8ab4f8; font-weight: 600; }
.dismiss { padding-bottom: 2px; }

.taskbar { display: grid; grid-template-columns: 1fr auto 1fr; align-items: center; height: 96px; background: #202020; font-size: 23px; line-height: 32px; }
.weather { display: flex; align-items: center; gap: 20px; padding-left: 45px; }
.weather span { color: #c8c8c8; }
.apps { display: flex; gap: 8px; }
.app { position: relative; display: flex; align-items: center; justify-content: center; width: 80px; height: 80px; padding: 0; border: 0; border-radius: 8px; background: none; }
.app.alert { background: #472628; }
.app.current { background: #2e2e2e; box-shadow: inset 0 0 0 2px #383838; }
.app :deep(svg) { overflow: visible; }
.mark { position: absolute; bottom: 2px; width: 12px; height: 6px; border-radius: 3px; }
.mark.pink { background: #ff99a4; }
.mark.blue { width: 32px; background: #60b8f0; }
.mark.grey { background: #9a9a9a; }
.tray { display: flex; align-items: center; justify-content: flex-end; padding-right: 31px; }
.lang { width: 60px; margin: 0 30px 0 32px; text-align: center; }
.status { display: flex; align-items: center; gap: 14px; }
.clock { width: 136px; text-align: right; white-space: nowrap; }
</style>
